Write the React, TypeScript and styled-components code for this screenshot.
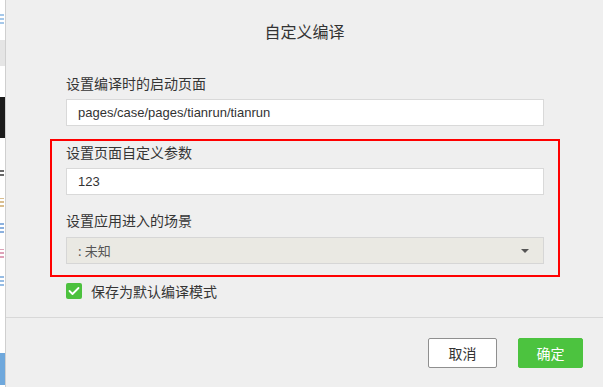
import styled, { createGlobalStyle } from "styled-components";

const GlobalStyle = createGlobalStyle`
  html, body {
    margin: 0;
    padding: 0;
    background: #efefef;
  }
  body {
    font-family: "Noto Sans", "Noto Sans CJK SC", sans-serif;
    color: #333;
  }
`;

const App: React.FC = () => {
  return (
    <>
      <GlobalStyle />
      <Page>
        <Strip>
          <Chip $top={14} $height={10} $color="#7fb0e0" />
          <Band $top={16} $height={26} $color="#e5e5e5" />
          <Band $top={31} $height={41} $color="#1b1b1b" />
          <Chip $top={32} $height={6} $color="#2a2a2a" />
          <Chip $top={22} $height={9} $color="#c9a25e" />
          <Chip $top={16} $height={10} $color="#5a8fd0" />
          <Chip $top={16} $height={9} $color="#d07a9a" />
          <Chip $top={18} $height={10} $color="#6aa0d8" />
          <Band $top={67} $height={32} $color="#6fa8dc" />
        </Strip>
        <Dialog>
          <Header>自定义编译</Header>
          <Form>
            <Field>
              <Label>设置编译时的启动页面</Label>
              <Input defaultValue="pages/case/pages/tianrun/tianrun" />
            </Field>
            <Highlight>
              <Field>
                <Label>设置页面自定义参数</Label>
                <Input defaultValue="123" />
              </Field>
              <Field $top={16} $gap={6}>
                <Label>设置应用进入的场景</Label>
                <Select>
                  <span>: 未知</span>
                  <Caret />
                </Select>
              </Field>
            </Highlight>
            <CheckRow>
              <CheckBox>
                <svg width="12" height="10" viewBox="0 0 12 10">
                  <path
                    d="M1.5 5 L4.5 8 L10.5 2"
                    fill="none"
                    stroke="#fff"
                    strokeWidth="1.8"
                    strokeLinecap="round"
                    strokeLinejoin="round"
                  />
                </svg>
              </CheckBox>
              保存为默认编译模式
            </CheckRow>
          </Form>
          <Footer>
            <Button>取消</Button>
            <Button $primary>确定</Button>
          </Footer>
        </Dialog>
      </Page>
    </>
  );
};

export default App;

const Page = styled.div`
  display: flex;
  width: 603px;
  height: 387px;
  overflow: hidden;
`;

const Strip = styled.div`
  width: 5px;
  flex-shrink: 0;
  background: #fff;
  border-right: 1px solid #cfcfcf;
  display: flex;
  flex-direction: column;
`;

const Band = styled.div<{ $top: number; $height: number; $color: string }>`
  margin-top: ${(p) => p.$top}px;
  height: ${(p) => p.$height}px;
  background: ${(p) => p.$color};
`;

const Chip = styled.div<{ $top: number; $height: number; $color: string }>`
  margin-top: ${(p) => p.$top}px;
  height: ${(p) => p.$height}px;
  width: 4px;
  opacity: 0.7;
  background: repeating-linear-gradient(
    0deg,
    ${(p) => p.$color} 0 2px,
    transparent 2px 4px
  );
`;

const Dialog = styled.div`
  flex: 1;
  display: flex;
  flex-direction: column;
  background: #efefef;
`;

const Header = styled.div`
  height: 64px;
  line-height: 64px;
  text-align: center;
  font-size: 16px;
  color: #333;
`;

const Form = styled.div`
  padding: 0 59px 0 60px;
  display: flex;
  flex-direction: column;
`;

const Field = styled.div<{ $top?: number; $gap?: number }>`
  display: flex;
  flex-direction: column;
  gap: ${(p) => p.$gap ?? 5}px;
  margin-top: ${(p) => p.$top ?? 10}px;
`;

const Label = styled.div`
  font-size: 14px;
  line-height: 20px;
  color: #353535;
`;

const Input = styled.input`
  box-sizing: border-box;
  height: 27px;
  width: 100%;
  border: 1px solid #d9d9d9;
  background: #fff;
  padding: 0 11px;
  font-family: "Liberation Sans", "Noto Sans CJK SC", sans-serif;
  font-size: 13px;
  color: #333;
  outline: none;
`;

const Highlight = styled.div`
  margin: 13px -16px 0;
  border: 2px solid #ff0000;
  padding: 0 14px 11px;

  & > ${Field}:first-child {
    margin-top: 2px;
  }
`;

const Select = styled.div`
  box-sizing: border-box;
  height: 27px;
  display: flex;
  align-items: center;
  justify-content: space-between;
  padding: 0 14px 0 11px;
  border: 1px solid #d6d6d6;
  background: #eae9e3;
  font-size: 13px;
  color: #555;
`;

const Caret = styled.span`
  width: 0;
  height: 0;
  border-left: 4px solid transparent;
  border-right: 4px solid transparent;
  border-top: 4px solid #555;
`;

const CheckRow = styled.label`
  display: flex;
  align-items: center;
  gap: 9px;
  margin-top: 6px;
  height: 16px;
  font-size: 14px;
  color: #353535;
`;

const CheckBox = styled.span`
  width: 16px;
  height: 16px;
  border-radius: 2px;
  background: #4cc13e;
  display: flex;
  align-items: center;
  justify-content: center;
`;

const Footer = styled.div`
  margin-top: 18px;
  border-top: 1px solid #d8d8d8;
  padding: 20px 20px 0 0;
  display: flex;
  justify-content: flex-end;
  gap: 21px;
`;

const Button = styled.button<{ $primary?: boolean }>`
  box-sizing: border-box;
  height: 30px;
  width: ${(p) => (p.$primary ? 65 : 69)}px;
  border-radius: 2px;
  font-family: "Noto Sans CJK SC", sans-serif;
  font-size: 14px;
  cursor: pointer;
  border: 1px solid ${(p) => (p.$primary ? "#4cc33f" : "#8f8f8f")};
  background: ${(p) => (p.$primary ? "#4cc33f" : "#fff")};
  color: ${(p) => (p.$primary ? "#fff" : "#333")};
`;
